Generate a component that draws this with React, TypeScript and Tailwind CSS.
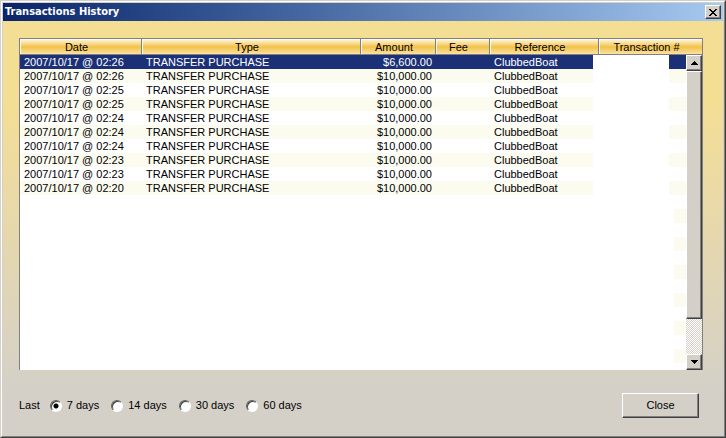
import { useState } from "react";

interface Transaction {
  date: string;
  type: string;
  amount: string;
  fee: string;
  reference: string;
}

const makeTransaction = (time: string, amount = "$10,000.00"): Transaction => ({
  date: `2007/10/17 @ ${time}`,
  type: "TRANSFER PURCHASE",
  amount,
  fee: "",
  reference: "ClubbedBoat",
});

const transactions: Transaction[] = [
  makeTransaction("02:26", "$6,600.00"),
  makeTransaction("02:26"),
  makeTransaction("02:25"),
  makeTransaction("02:25"),
  makeTransaction("02:24"),
  makeTransaction("02:24"),
  makeTransaction("02:24"),
  makeTransaction("02:23"),
  makeTransaction("02:23"),
  makeTransaction("02:20"),
];

const emptyRows = Array.from({ length: 13 }, (_, i) => i);

const columns = [
  { label: "Date", width: "w-[122px]" },
  { label: "Type", width: "" },
  { label: "Amount", width: "w-[75px]" },
  { label: "Fee", width: "w-[54px]" },
  { label: "Reference", width: "w-[109px]" },
  { label: "Transaction #", width: "w-[103px]" },
];

const ranges = [7, 14, 30, 60];

const raised =
  "bg-[#d4d0c8] border border-t-white border-l-white border-r-[#404040] border-b-[#404040] shadow-[inset_-1px_-1px_0_#808080]";

function TitleBar() {
  return (
    <header className="flex h-[18px] items-center justify-between bg-linear-to-r from-[#0a246a] to-[#a6caf0] px-[2px]">
      <h1 className="font-['DejaVu_Sans_Condensed','DejaVu_Sans',sans-serif] text-[11px] leading-[18px] font-bold text-white">
        Transactions History
      </h1>
      <button
        type="button"
        aria-label="Close window"
        className={`flex h-[14px] w-4 items-center justify-center ${raised}`}
      >
        <svg width="8" height="7" viewBox="0 0 8 7" shapeRendering="crispEdges">
          <path
            d="M0 0h2v1h1v1h2v-1h1v-1h2v1h-1v1h-1v1h-1v1h1v1h1v1h1v1h-2v-1h-1v-1h-2v1h-1v1h-2v-1h1v-1h1v-1h1v-1h-1v-1h-1v-1h-1z"
            fill="#000"
          />
        </svg>
      </button>
    </header>
  );
}

function Arrow({ down = false }: { down?: boolean }) {
  return (
    <svg width="7" height="4" viewBox="0 0 7 4" shapeRendering="crispEdges">
      <path
        d={
          down
            ? "M0 0h7v1h-1v1h-1v1h-1v1h-1v-1h-1v-1h-1v-1h-1z"
            : "M3 0h1v1h1v1h1v1h1v1h-7v-1h1v-1h1v-1h1z"
        }
        fill="#000"
      />
    </svg>
  );
}

function ScrollBar() {
  return (
    <div className="absolute top-4 right-0 bottom-0 flex w-4 flex-col bg-[#eae8e4]">
      <button
        type="button"
        aria-label="Scroll up"
        className={`flex h-4 items-center justify-center ${raised}`}
      >
        <Arrow />
      </button>
      <div className={`grow-[249] ${raised}`} />
      <div className="grow-[36] bg-[repeating-conic-gradient(#ffffff_0%_25%,#d4d0c8_0%_50%)] bg-size-[2px_2px]" />
      <button
        type="button"
        aria-label="Scroll down"
        className={`flex h-4 items-center justify-center ${raised}`}
      >
        <Arrow down />
      </button>
    </div>
  );
}

function TransactionsTable() {
  const [selected, setSelected] = useState(0);

  return (
    <div className="relative min-h-0 flex-1 overflow-hidden border-t border-r border-l border-[#808080] bg-white">
      <table className="w-full table-fixed border-separate border-spacing-0">
        <thead>
          <tr className="bg-linear-to-b from-[#fff8de] via-[#f3c244] to-[#fbe7ac]">
            {columns.map((column) => (
              <th
                key={column.label}
                scope="col"
                className={`h-4 border-r border-b border-[#808080] pt-px pr-2 pb-0 pl-0 leading-[14px] font-normal shadow-[inset_1px_1px_0_#fffbea] last:border-r-0 ${column.width}`}
              >
                {column.label}
              </th>
            ))}
          </tr>
        </thead>
        <tbody>
          {transactions.map((row, index) => (
            <tr
              key={index}
              onClick={() => setSelected(index)}
              className={
                index === selected
                  ? "bg-[#1c3078] text-white"
                  : "odd:bg-white even:bg-[#fbfbf0]"
              }
            >
              <td className="h-[14px] px-1 py-0 leading-[14px]">{row.date}</td>
              <td className="px-1 py-0 leading-[14px]">{row.type}</td>
              <td className="px-1 py-0 text-right leading-[14px]">{row.amount}</td>
              <td className="px-1 py-0 leading-[14px]">{row.fee}</td>
              <td className="px-1 py-0 leading-[14px]">{row.reference}</td>
              <td />
            </tr>
          ))}
          {emptyRows.map((row) => (
            <tr key={row} className="odd:bg-white even:bg-[#fbfbf0]">
              <td colSpan={6} className="h-[14px] p-0" />
            </tr>
          ))}
        </tbody>
      </table>
      {/* blanked-out transaction numbers and unused rows */}
      <div className="absolute top-4 right-[33px] h-[140px] w-[76px] bg-white" />
      <div className="absolute top-[156px] right-7 bottom-0 left-0 bg-white" />
      <ScrollBar />
    </div>
  );
}

function RangePicker() {
  const [range, setRange] = useState(7);

  return (
    <fieldset className="flex items-center">
      <span className="mr-[10px]">Last</span>
      <div className="flex gap-3">
        {ranges.map((days) => (
          <label key={days} className="flex items-center gap-[5px]">
            <input
              type="radio"
              name="range"
              value={days}
              checked={range === days}
              onChange={() => setRange(days)}
              className="size-3 appearance-none rounded-full border border-t-[#606060] border-r-white border-b-white border-l-[#606060] bg-white shadow-[inset_1px_1px_0_#404040] checked:bg-[radial-gradient(circle,#000_2px,transparent_3px)]"
            />
            {days} days
          </label>
        ))}
      </div>
    </fieldset>
  );
}

export default function App() {
  return (
    <div className="flex h-screen flex-col border border-t-[#d4d0c8] border-r-[#404040] border-b-[#404040] border-l-[#d4d0c8] font-['Liberation_Sans',Arial,sans-serif] text-[11px] text-black">
      <div className="flex min-h-0 flex-1 flex-col border border-t-white border-r-[#808080] border-b-[#808080] border-l-white bg-[#d4d0c8] p-px">
        <TitleBar />
        <main className="flex min-h-0 flex-1 flex-col bg-linear-to-b from-[#f4de94] from-20% to-[#d4d0c8] to-90% px-4 pt-[17px] pb-[17px]">
          <div className="flex min-h-0 flex-1 flex-col pr-1">
            <TransactionsTable />
          </div>
          <div className="mt-[23px] flex items-center justify-between pr-2">
            <RangePicker />
            <button type="button" className={`h-[25px] w-[77px] ${raised}`}>
              Close
            </button>
          </div>
        </main>
      </div>
    </div>
  );
}
